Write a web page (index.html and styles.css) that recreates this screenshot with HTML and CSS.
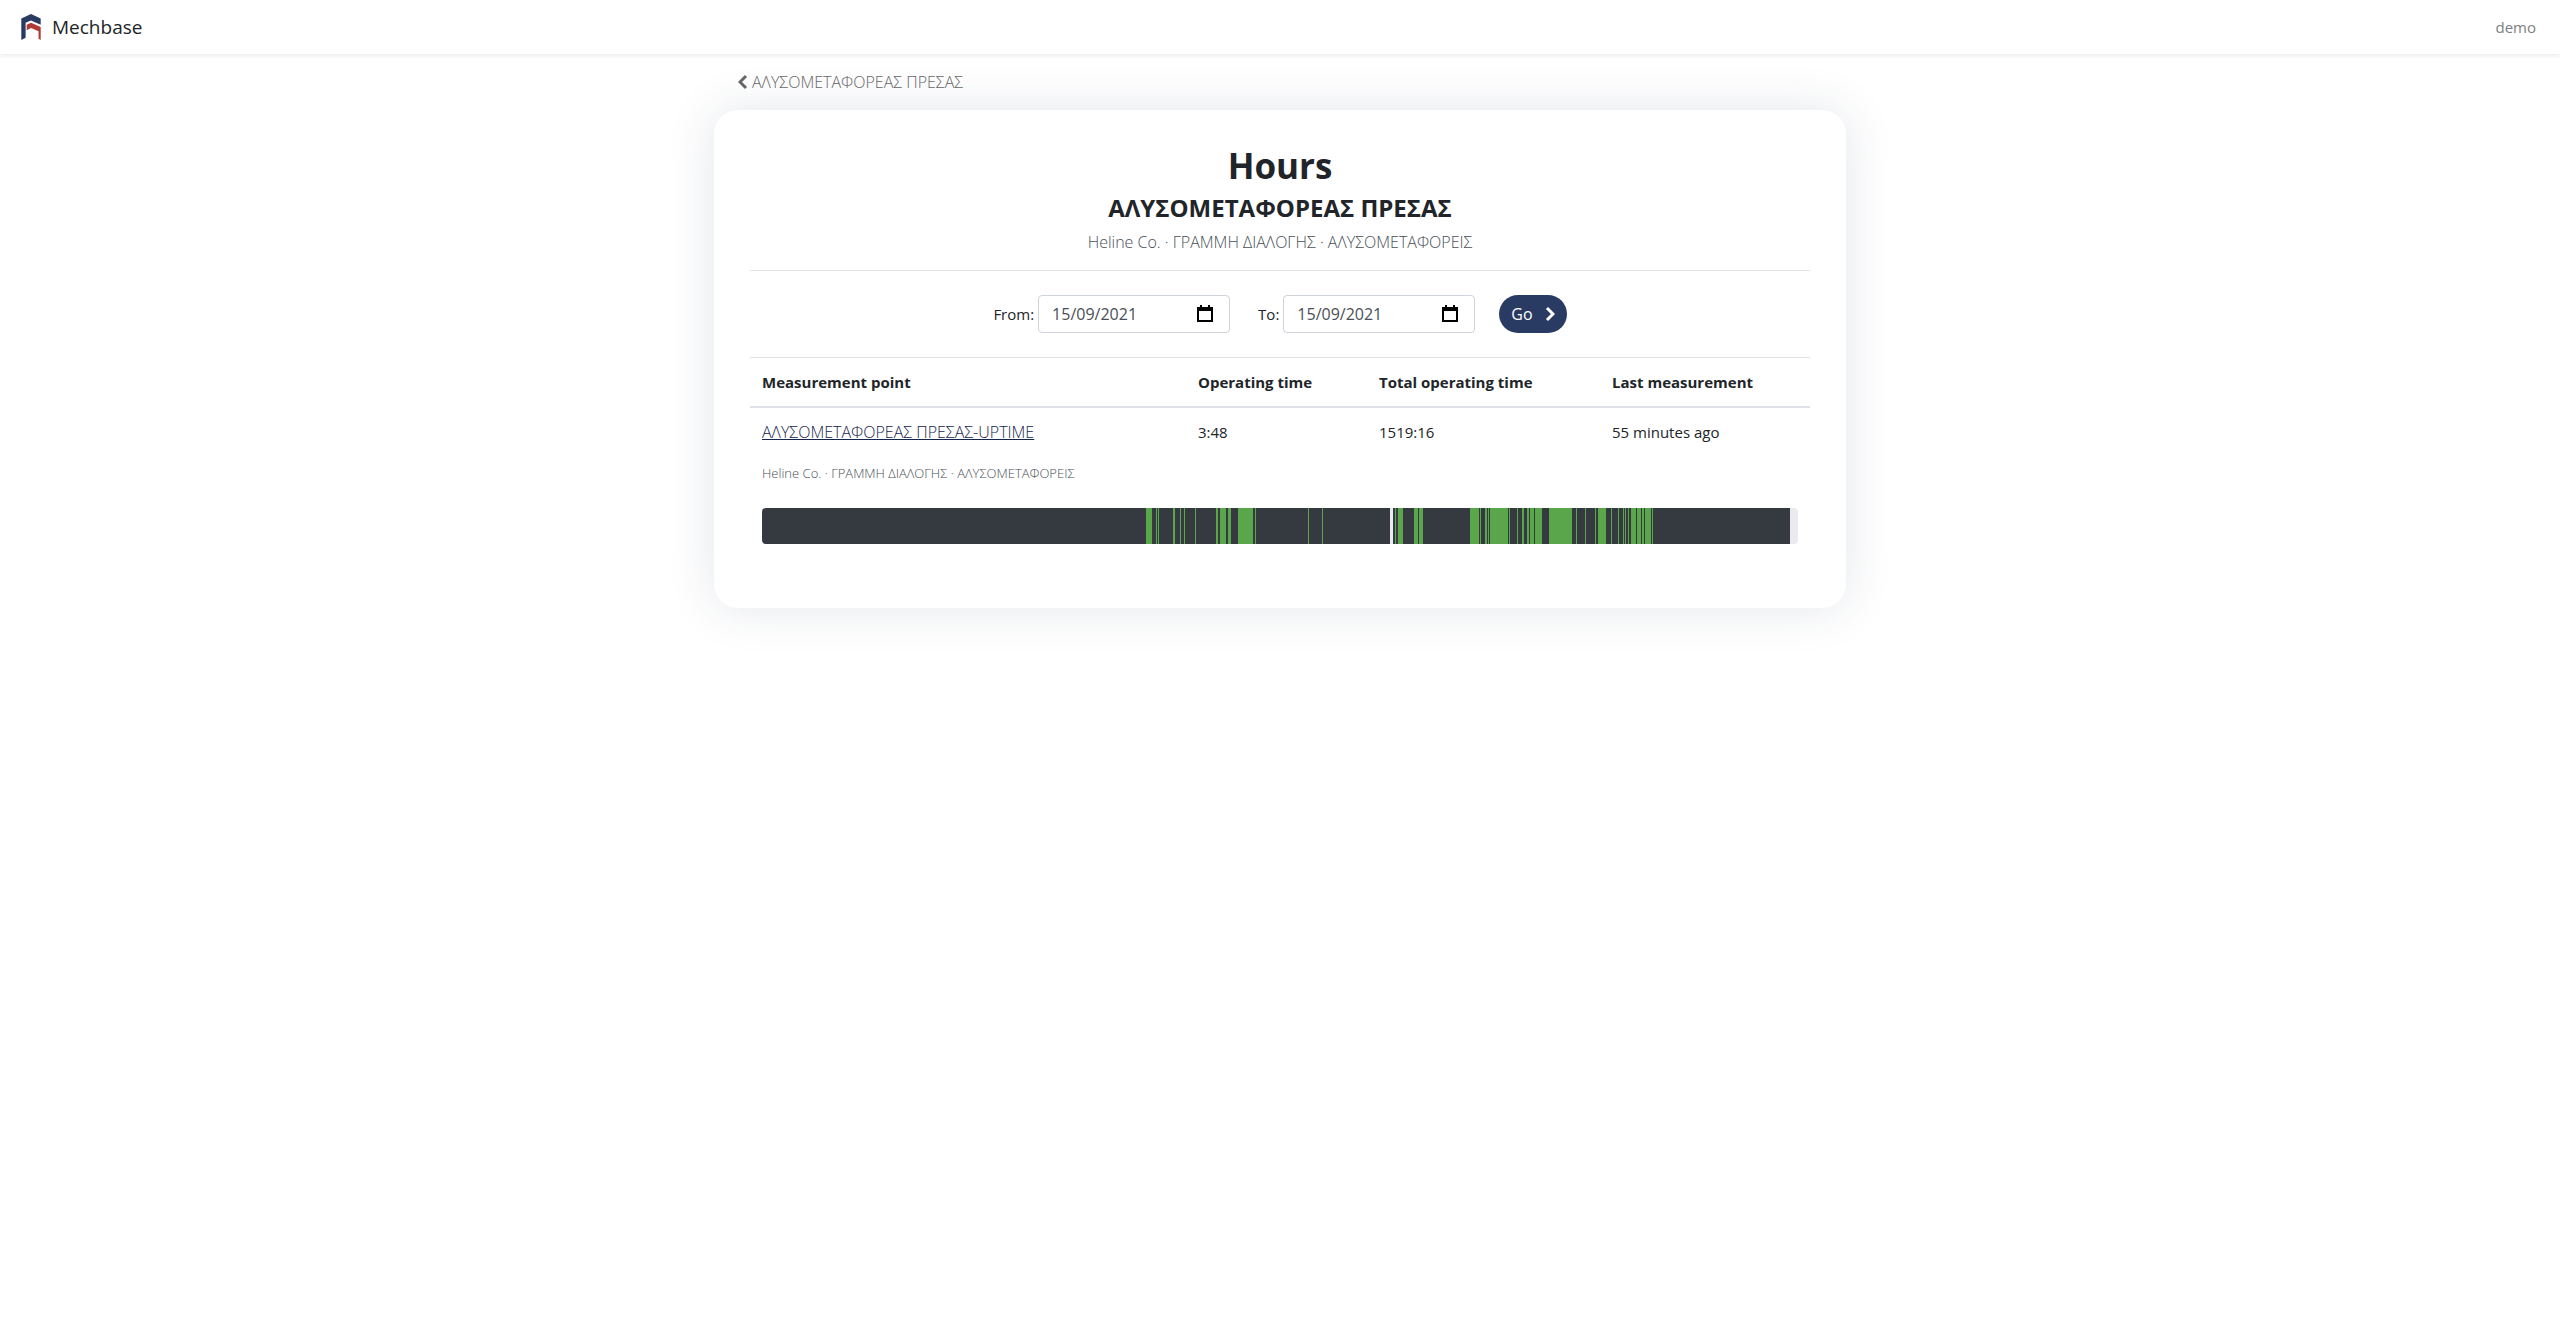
FILE: index.html
```html
<!DOCTYPE html>
<html lang="en">
<head>
  <meta charset="UTF-8">
  <meta name="viewport" content="width=device-width, initial-scale=1.0">
  <title>Hours - Mechbase</title>
  <link rel="stylesheet" href="styles.css">
</head>
<body>

<header class="navbar">
  <a class="brand" href="#">
    <svg class="logo" viewBox="0 0 20 26" aria-hidden="true">
      <path fill="#293a63" d="M1 5 L10 1 L19 5 V11 L10 7 L5 9 V23 L1 25 Z"/>
      <path fill="#b03a35" d="M6 11 L10 9 L19 13 V25 L17 24 V17 L10 14 L6 16 Z"/>
    </svg>
    <span>Mechbase</span>
  </a>
  <a class="user-link" href="#">demo</a>
</header>

<main class="container">
  <a class="back-link" href="#">
    <svg class="chevron" viewBox="0 0 10 16" aria-hidden="true"><path d="M8 2 L2 8 L8 14"/></svg>
    ΑΛΥΣΟΜΕΤΑΦΟΡΕΑΣ ΠΡΕΣΑΣ
  </a>

  <section class="card">
    <h1>Hours</h1>
    <h2>ΑΛΥΣΟΜΕΤΑΦΟΡΕΑΣ ΠΡΕΣΑΣ</h2>
    <p class="path">Heline Co. · ΓΡΑΜΜΗ ΔΙΑΛΟΓΗΣ · ΑΛΥΣΟΜΕΤΑΦΟΡΕΙΣ</p>

    <form class="range-form">
      <div class="field">
        <label for="from">From:</label>
        <div class="date-box">
          <input type="text" id="from" value="15/09/2021">
          <svg class="calendar" viewBox="0 0 16 18" aria-hidden="true"><path fill-rule="evenodd" d="M3 0h2v2h6V0h2v2h3v15H0V2h3zM2 6v9h12V6z"/></svg>
        </div>
      </div>
      <div class="field">
        <label for="to">To:</label>
        <div class="date-box">
          <input type="text" id="to" value="15/09/2021">
          <svg class="calendar" viewBox="0 0 16 18" aria-hidden="true"><path fill-rule="evenodd" d="M3 0h2v2h6V0h2v2h3v15H0V2h3zM2 6v9h12V6z"/></svg>
        </div>
      </div>
      <button type="button" class="go-button">
        Go
        <svg class="chevron" viewBox="0 0 10 16" aria-hidden="true"><path d="M2 2 L8 8 L2 14"/></svg>
      </button>
    </form>

    <table class="hours">
      <thead>
        <tr>
          <th class="col-point">Measurement point</th>
          <th class="col-time">Operating time</th>
          <th class="col-total">Total operating time</th>
          <th>Last measurement</th>
        </tr>
      </thead>
      <tbody>
        <tr>
          <td><a href="#">ΑΛΥΣΟΜΕΤΑΦΟΡΕΑΣ ΠΡΕΣΑΣ-UPTIME</a></td>
          <td>3:48</td>
          <td>1519:16</td>
          <td>55 minutes ago</td>
        </tr>
        <tr>
          <td class="point-path" colspan="4">Heline Co. · ΓΡΑΜΜΗ ΔΙΑΛΟΓΗΣ · ΑΛΥΣΟΜΕΤΑΦΟΡΕΙΣ</td>
        </tr>
        <tr>
          <td class="timeline-cell" colspan="4"><div class="timeline" id="timeline"></div></td>
        </tr>
      </tbody>
    </table>
  </section>
</main>

<script src="script.js"></script>
</body>
</html>
```
FILE: styles.css
```css
* {
  box-sizing: border-box;
}

body {
  margin: 0;
  font-family: 'Open Sans', 'Noto Sans', sans-serif;
  font-size: 16px;
  line-height: 24px;
  color: #212529;
  background: #fff;
}

a {
  text-decoration: none;
}

.navbar {
  display: flex;
  align-items: center;
  justify-content: space-between;
  height: 54px;
  padding: 0 24px 0 20px;
  background: #fff;
  box-shadow: 0 2px 4px rgba(0, 0, 0, 0.075);
  position: relative;
  z-index: 1;
}

.brand {
  display: flex;
  align-items: center;
  gap: 10px;
  font-size: 19px;
  color: #212529;
}

.logo {
  width: 22px;
  height: 28px;
}

.user-link {
  font-size: 15px;
  color: #808080;
}

.container {
  max-width: 1132px;
  margin: 0 auto;
  padding-bottom: 72px;
}

.back-link {
  display: flex;
  align-items: center;
  gap: 4px;
  padding: 16px 24px;
  font-weight: 300;
  color: #666;
}

.chevron {
  width: 10px;
  height: 16px;
  fill: none;
  stroke: currentColor;
  stroke-width: 3;
}

.card {
  padding: 36px;
  border-radius: 24px;
  background: #fff;
  box-shadow: 0 0 48px rgba(41, 58, 99, 0.125);
}

.card h1 {
  margin: 0 0 8px;
  font-size: 35px;
  line-height: 40px;
  font-weight: 700;
  text-align: center;
}

.card h2 {
  margin: 0 0 8px;
  font-size: 24px;
  line-height: 28px;
  font-weight: 700;
  text-align: center;
}

.path {
  margin: 0;
  padding-bottom: 16px;
  border-bottom: 1px solid #e5e5e5;
  text-align: center;
  font-weight: 300;
  color: #495057;
}

.range-form {
  display: flex;
  justify-content: center;
  gap: 24px;
  padding: 24px 0;
}

.field {
  display: flex;
  align-items: center;
  gap: 4px;
  font-size: 15px;
}

.field + .field {
  margin-left: 4px;
}

.date-box {
  position: relative;
}

.date-box input {
  display: block;
  width: 192px;
  height: 38px;
  padding: 6px 13px;
  border: 1px solid #ced4da;
  border-radius: 4px;
  font: inherit;
  font-size: 16px;
  color: #495057;
  background: #fff;
}

.calendar {
  position: absolute;
  top: 10px;
  right: 17px;
  width: 16px;
  height: 18px;
}

.go-button {
  display: flex;
  align-items: center;
  gap: 12px;
  height: 38px;
  padding: 0 12px;
  border: 0;
  border-radius: 19px;
  font: inherit;
  color: #fff;
  background: #293a63;
}

.hours {
  width: 100%;
  table-layout: fixed;
  border-collapse: collapse;
  border-top: 1px solid #dee2e6;
}

.hours th {
  padding: 12px;
  border-bottom: 2px solid #dee2e6;
  font-size: 15px;
  font-weight: 700;
  text-align: left;
}

.hours td {
  padding: 12px;
  font-size: 15px;
}

.hours td a {
  font-size: 16px;
  font-weight: 300;
  color: #15254d;
  text-decoration: underline;
}

.col-point {
  width: 436px;
}

.col-time {
  width: 181px;
}

.col-total {
  width: 233px;
}

.hours .point-path {
  padding: 5px 12px;
  font-size: 13px;
  font-weight: 300;
  color: #495057;
}

.hours .timeline-cell {
  padding: 18px 12px 28px;
}

.timeline {
  display: flex;
  height: 36px;
  border-radius: 4px;
  overflow: hidden;
  background: #ebebef;
}

.timeline div {
  flex: 0 0 0;
}

.timeline .off {
  background: #343a40;
}

.timeline .on {
  background: #5aa64b;
}
```
FILE: script.js
```js
// start and end of each run, out of 1036 steps for the day
const LENGTH = 1036;
const running = [
  [384, 390], [394, 395], [396, 397], [411, 413], [418, 419], [422, 423],
  [433, 434], [454, 456], [458, 464], [466, 469], [476, 491], [493, 494],
  [546, 547], [560, 561], [633, 634], [636, 641], [652, 656], [657, 661],
  [708, 717], [718, 719], [723, 725], [726, 727], [728, 746], [747, 748],
  [755, 756], [760, 762], [765, 767], [768, 772], [773, 780], [787, 810],
  [814, 815], [823, 824], [833, 834], [836, 844], [849, 850], [856, 857],
  [861, 862], [863, 864], [866, 867], [869, 874], [875, 879], [880, 882],
  [883, 889], [890, 891]
];
const missing = [[628, 631], [1028, LENGTH]];

const timeline = document.getElementById("timeline");

function addPart(name, size) {
  if (size <= 0) return;
  const part = document.createElement("div");
  part.className = name;
  part.style.flexGrow = size;
  timeline.appendChild(part);
}

const parts = running.map(r => ["on", ...r])
  .concat(missing.map(m => ["none", ...m]))
  .sort((a, b) => a[1] - b[1]);

let position = 0;
parts.forEach(([name, start, end]) => {
  addPart("off", start - position);
  addPart(name, end - start);
  position = end;
});
```
